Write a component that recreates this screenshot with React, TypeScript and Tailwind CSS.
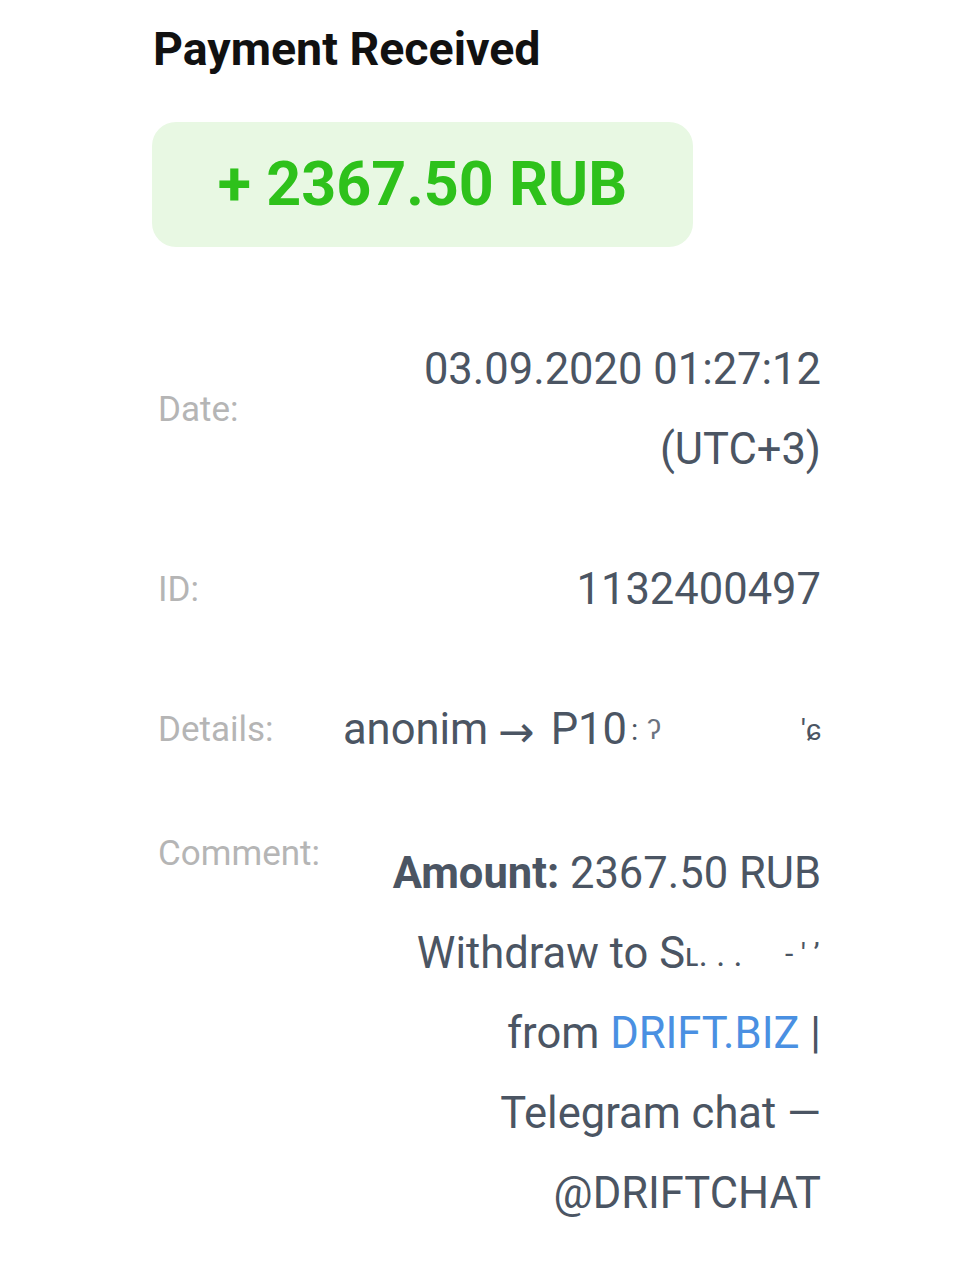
const font = { fontFamily: 'Roboto, "Liberation Sans", sans-serif' };

function Row({
  label,
  align = 'center',
  children,
}: {
  label: string;
  align?: 'center' | 'start';
  children: React.ReactNode;
}) {
  return (
    <div className={`flex justify-between pl-[6px] ${align === 'center' ? 'items-center' : 'items-start'}`}>
      <div className="shrink-0 text-[35px] leading-[40px] text-[#b5b5b5]">{label}</div>
      <div className="text-right text-[43.5px] leading-[80px] text-[#4b5563]">{children}</div>
    </div>
  );
}

export default function App() {
  return (
    <div className="min-h-screen w-[970px] bg-white" style={font}>
      <div className="ml-[152px] w-[669px] pt-[21px] pb-[40px]">
        <h1 className="pl-[1px] text-[46.5px] font-bold leading-[56px] text-[#111111]">Payment Received</h1>

        <div className="mt-[45px] flex h-[125px] w-[541px] items-center justify-center rounded-[24px] bg-[#e8f8e3]">
          <span className="text-[61px] font-bold leading-none text-[#2ec11b]">+ 2367.50 RUB</span>
        </div>

        <div className="mt-[83px] flex flex-col gap-[60px]">
          <Row label="Date:">
            <div>03.09.2020 01:27:12</div>
            <div>(UTC+3)</div>
          </Row>

          <Row label="ID:">
            <div>1132400497</div>
          </Row>

          <Row label="Details:">
            <div className="flex items-center justify-end">
              <span>anonim</span>
              <span className="ml-[10px] mr-[16px]" style={{ fontFamily: '"Noto Sans", "DejaVu Sans", sans-serif' }}>→</span>
              <span>P10</span>
              <span className="inline-block w-[20px] pl-[4px] text-left text-[30px] leading-none text-[#4b5563]">:</span>
              <span className="inline-block w-[24px] text-left text-[28px] leading-none text-[#6b7280]">ʔ</span>
              <span className="inline-block w-[118px]" />
              <span className="inline-block w-[32px] text-[30px] leading-none text-[#4b5563]">'ɕ</span>
            </div>
          </Row>

          <div className="mt-[4px]">
            <Row label="Comment:" align="start">
              <div>
                <span className="font-bold">Amount:</span> 2367.50 RUB
              </div>
              <div className="flex items-center justify-end">
                <span>Withdraw to S</span>
                <span className="inline-block w-[60px] text-left text-[34px] text-[#4b5563]">ʟ. . .</span>
                <span className="inline-block w-[40px]" />
                <span className="inline-block w-[36px] text-left text-[30px] text-[#4b5563]">- ' ʼ</span>
              </div>
              <div>
                from <span className="text-[#4a90e2]">DRIFT.BIZ</span> |
              </div>
              <div>Telegram chat —</div>
              <div>@DRIFTCHAT</div>
            </Row>
          </div>
        </div>
      </div>
    </div>
  );
}
